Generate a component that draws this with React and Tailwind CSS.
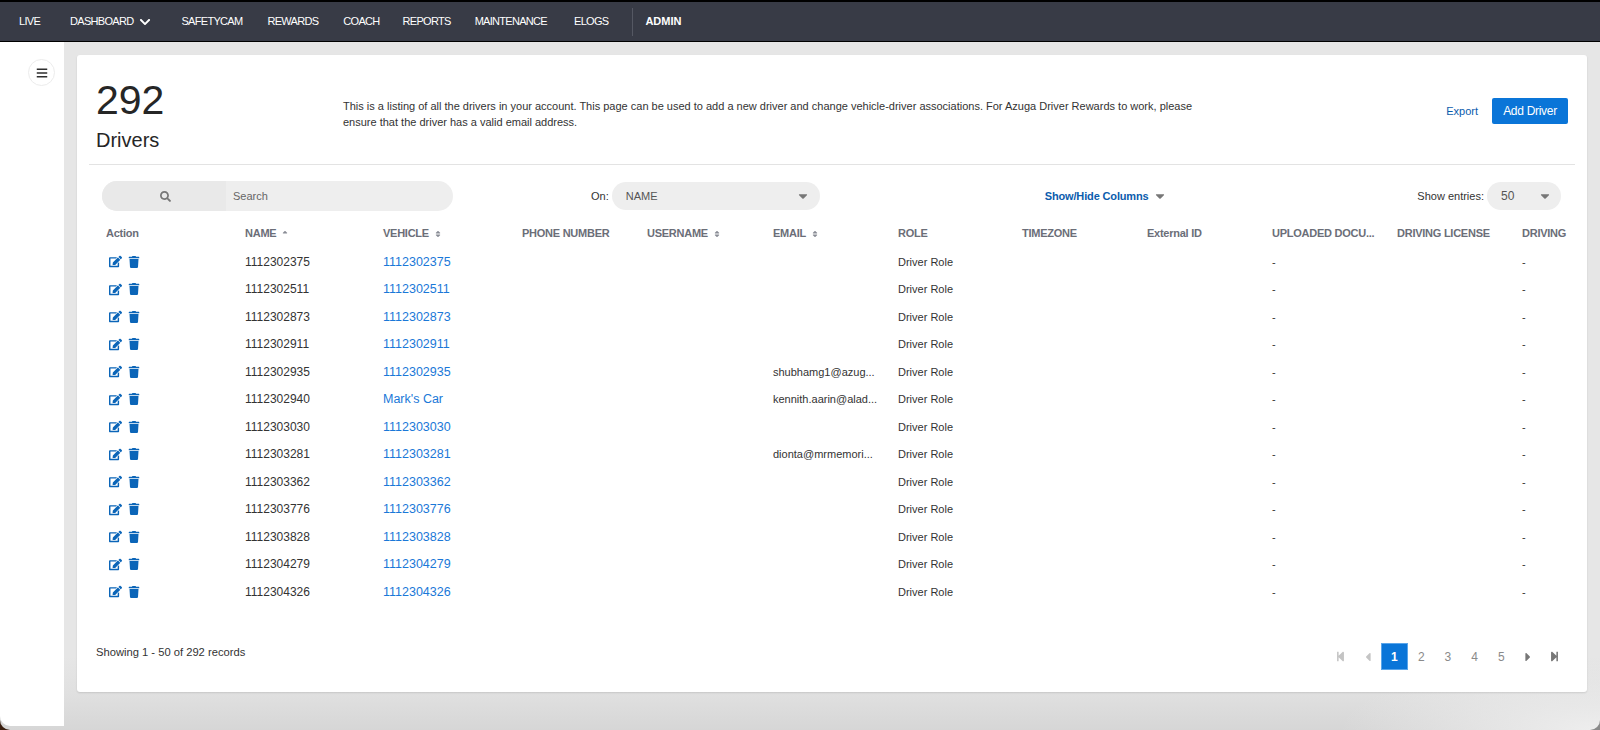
import { FaBars, FaCaretDown, FaCaretLeft, FaCaretRight, FaChevronDown, FaEdit, FaSearch, FaSort, FaSortUp, FaStepBackward, FaStepForward, FaTrash } from "react-icons/fa";

const drivers = [
  { name: "1112302375", vehicle: "1112302375" },
  { name: "1112302511", vehicle: "1112302511" },
  { name: "1112302873", vehicle: "1112302873" },
  { name: "1112302911", vehicle: "1112302911" },
  { name: "1112302935", vehicle: "1112302935", email: "shubhamg1@azug..." },
  { name: "1112302940", vehicle: "Mark's Car", email: "kennith.aarin@alad..." },
  { name: "1112303030", vehicle: "1112303030" },
  { name: "1112303281", vehicle: "1112303281", email: "dionta@mrmemori..." },
  { name: "1112303362", vehicle: "1112303362" },
  { name: "1112303776", vehicle: "1112303776" },
  { name: "1112303828", vehicle: "1112303828" },
  { name: "1112304279", vehicle: "1112304279" },
  { name: "1112304326", vehicle: "1112304326" },
];

const cols = "grid grid-cols-[139px_138px_139px_125px_126px_125px_124px_125px_125px_125px_125px_1fr]";

const Head = ({ children, sort }) => (
  <div className="flex items-center gap-[5px] whitespace-nowrap">
    <span>{children}</span>
    {sort === "up" && <FaSortUp className="text-[8px] text-[#8a8d96]" />}
    {sort === "both" && <FaSort className="text-[8px] text-[#8a8d96]" />}
  </div>
);

const App = () => {
  return (
    <div className="h-[730px] w-[1600px] overflow-hidden bg-[linear-gradient(to_right,#3a1f10_50%,#8a8a8a_50%)] font-['Liberation_Sans',sans-serif] text-[#2e2e2e]">
      <div className="h-[730px] flex flex-col rounded-b-[10px] bg-[radial-gradient(260px_70px_at_100%_100%,#eeeeee,transparent),linear-gradient(#e6e6e6_0,#e6e6e6_90%,#e0e0e0_95%,#d6d6d6_100%)]">
        <nav className="h-[42px] shrink-0 flex items-center bg-[#383b46] border-t-2 border-t-black border-b border-b-black text-white text-[11px] tracking-[-0.7px]">
          <a className="ml-[19px]">LIVE</a>
          <a className="ml-[30px] flex items-center gap-[6px]">DASHBOARD <FaChevronDown className="text-[12px]" /></a>
          <a className="ml-[30px]">SAFETYCAM</a>
          <a className="ml-[25px]">REWARDS</a>
          <a className="ml-[25px]">COACH</a>
          <a className="ml-[23px]">REPORTS</a>
          <a className="ml-[24px]">MAINTENANCE</a>
          <a className="ml-[27px]">ELOGS</a>
          <div className="ml-[24px] h-[28px] w-px bg-[#555863]" />
          <a className="ml-[12px] font-bold tracking-normal">ADMIN</a>
        </nav>
        <div className="flex flex-1 min-h-0">
          <aside className="w-[64px] h-[684px] shrink-0 bg-white rounded-bl-[10px] pt-[17px] pl-[28px]">
            <button className="h-[27px] w-[27px] rounded-full bg-white border border-[#ececec] flex items-center justify-center text-[#2e2e2e]">
              <FaBars className="text-[12px]" />
            </button>
          </aside>
          <main className="ml-[13px] mt-[13px] w-[1510px] h-[637px] bg-white rounded-[3px] shadow-[0_1px_2px_rgba(0,0,0,0.12)] flex flex-col">
            <header className="mx-[12px] h-[110px] shrink-0 border-b border-[#e3e3e3] flex">
              <div className="ml-[7px] w-[247px] pt-[21px]">
                <div className="text-[41px] leading-[48px] text-[#262626]">292</div>
                <div className="text-[20px] leading-[26px] mt-[3px] text-[#262626]">Drivers</div>
              </div>
              <p className="pt-[44px] w-[870px] text-[11px] leading-[15.5px] text-[#333]">
                This is a listing of all the drivers in your account. This page can be used to add a new driver and change vehicle-driver associations. For Azuga Driver Rewards to work, please ensure that the driver has a valid email address.
              </p>
              <div className="ml-auto mr-[7px] mt-[43px] h-[26px] flex items-center gap-[14px]">
                <a className="text-[11px] text-[#0b5cad]">Export</a>
                <button className="h-[26px] w-[76px] rounded-[2px] bg-[#0a75d8] text-white text-[12px] tracking-[-0.3px]">Add Driver</button>
              </div>
            </header>
            <div className="flex items-center h-[30px] mt-[16px] ml-[25px] mr-[26px] text-[11px]">
              <div className="w-[351px] h-[30px] rounded-full bg-[#eeeeee] overflow-hidden flex">
                <div className="w-[124px] bg-[#e9e9e9] flex items-center justify-center pl-[2px] text-[#777]">
                  <FaSearch className="text-[11px]" />
                </div>
                <div className="flex items-center pl-[7px] text-[#666]">Search</div>
              </div>
              <span className="ml-[138px] text-[#333]">On:</span>
              <div className="ml-[3px] w-[208px] h-[28px] rounded-full bg-[#eeeeee] flex items-center justify-between pl-[14px] pr-[10px] text-[#555]">
                NAME <FaCaretDown className="text-[14px] text-[#777]" />
              </div>
              <div className="ml-[225px] flex items-center gap-[4px] font-bold tracking-[-0.15px] text-[#0b5cad]">
                Show/Hide Columns <FaCaretDown className="text-[14px] text-[#777]" />
              </div>
              <span className="ml-auto mr-[3px] text-[#333]">Show entries:</span>
              <div className="w-[74px] h-[28px] rounded-full bg-[#eeeeee] flex items-center justify-between pl-[14px] pr-[9px] text-[12px] text-[#555]">
                50 <FaCaretDown className="text-[14px] text-[#777]" />
              </div>
            </div>
            <div className="mt-[8px] ml-[29px] mr-[19px] overflow-hidden">
              <div className={`${cols} h-[29px] items-center font-bold text-[11px] tracking-[-0.25px] text-[#6b6e78]`}>
                <Head>Action</Head>
                <Head sort="up">NAME</Head>
                <Head sort="both">VEHICLE</Head>
                <Head>PHONE NUMBER</Head>
                <Head sort="both">USERNAME</Head>
                <Head sort="both">EMAIL</Head>
                <Head>ROLE</Head>
                <Head>TIMEZONE</Head>
                <Head>External ID</Head>
                <Head>UPLOADED DOCU...</Head>
                <Head>DRIVING LICENSE</Head>
                <Head>DRIVING</Head>
              </div>
              {drivers.map((d) => (
                <div key={d.name} className={`${cols} h-[27.5px] items-center text-[11px] text-[#333]`}>
                  <div className="flex items-center gap-[6px] pl-[3px] text-[#0b65b8] text-[13px]">
                    <FaEdit />
                    <FaTrash className="text-[12px]" />
                  </div>
                  <div className="text-[12px]">{d.name}</div>
                  <a className="pt-px text-[12.5px] text-[#1a78d8]">{d.vehicle}</a>
                  <div />
                  <div />
                  <div className="whitespace-nowrap">{d.email}</div>
                  <div>Driver Role</div>
                  <div />
                  <div />
                  <div>-</div>
                  <div />
                  <div>-</div>
                </div>
              ))}
            </div>
            <footer className="mt-auto mb-[22px] ml-[19px] mr-[19px] flex items-start justify-between">
              <span className="mt-px text-[11.2px] text-[#333]">Showing 1 - 50 of 292 records</span>
              <div className="flex items-center text-[12px] text-[#8a8a8a]">
                <span className="w-[26.7px] flex justify-center text-[#c4c4c4] text-[11px]"><FaStepBackward /></span>
                <span className="w-[26.7px] flex justify-center text-[#c4c4c4] text-[14px]"><FaCaretLeft /></span>
                <span className="w-[27px] h-[27px] flex items-center justify-center bg-[#0a75d8] text-white font-bold border border-[#5aa5ea]">1</span>
                <span className="w-[26.7px] text-center">2</span>
                <span className="w-[26.7px] text-center">3</span>
                <span className="w-[26.7px] text-center">4</span>
                <span className="w-[26.7px] text-center">5</span>
                <span className="w-[26.7px] flex justify-center text-[#777] text-[14px]"><FaCaretRight /></span>
                <span className="w-[26.7px] flex justify-center text-[#777] text-[11px]"><FaStepForward /></span>
              </div>
            </footer>
          </main>
        </div>
      </div>
    </div>
  );
};

export default App;
